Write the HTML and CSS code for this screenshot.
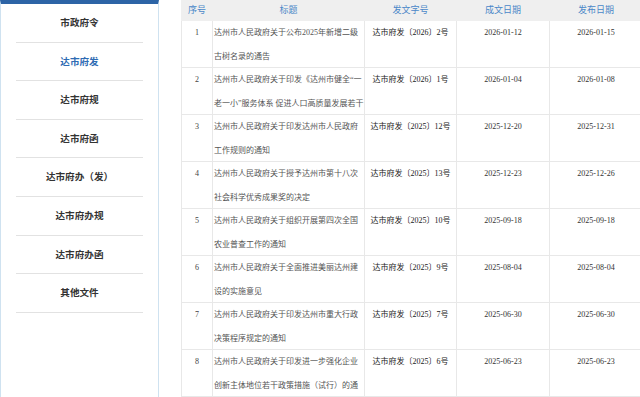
FILE: index.html
```html
<!DOCTYPE html>
<html lang="zh-CN">
<head>
    <meta charset="UTF-8">
    <meta name="viewport" content="width=device-width, initial-scale=1.0">
    <title>达州市人民政府 - 政府文件</title>
    <link rel="stylesheet" href="styles.css">
</head>
<body>

<aside class="side-nav">
    <ul class="nav-list">
        <li class="nav-item">市政府令</li>
        <li class="nav-item active">达市府发</li>
        <li class="nav-item">达市府规</li>
        <li class="nav-item">达市府函</li>
        <li class="nav-item">达市府办（发）</li>
        <li class="nav-item">达市府办规</li>
        <li class="nav-item">达市府办函</li>
        <li class="nav-item">其他文件</li>
    </ul>
</aside>

<main class="doc-list">
    <table class="doc-table">
        <colgroup>
            <col class="col-no">
            <col class="col-title">
            <col class="col-code">
            <col class="col-date">
            <col class="col-date">
        </colgroup>
        <thead>
            <tr>
                <th>序号</th>
                <th>标题</th>
                <th>发文字号</th>
                <th>成文日期</th>
                <th>发布日期</th>
            </tr>
        </thead>
        <tbody>
            <tr>
                <td class="no">1</td>
                <td><div class="title">达州市人民政府关于公布2025年新增二级古树名录的通告</div></td>
                <td class="code">达市府发〔2026〕2号</td>
                <td class="date">2026-01-12</td>
                <td class="date">2026-01-15</td>
            </tr>
            <tr>
                <td class="no">2</td>
                <td><div class="title">达州市人民政府关于印发《达州市健全“一老一小”服务体系 促进人口高质量发展若干措施》的通知</div></td>
                <td class="code">达市府发〔2026〕1号</td>
                <td class="date">2026-01-04</td>
                <td class="date">2026-01-08</td>
            </tr>
            <tr>
                <td class="no">3</td>
                <td><div class="title">达州市人民政府关于印发达州市人民政府工作规则的通知</div></td>
                <td class="code">达市府发〔2025〕12号</td>
                <td class="date">2025-12-20</td>
                <td class="date">2025-12-31</td>
            </tr>
            <tr>
                <td class="no">4</td>
                <td><div class="title">达州市人民政府关于授予达州市第十八次社会科学优秀成果奖的决定</div></td>
                <td class="code">达市府发〔2025〕13号</td>
                <td class="date">2025-12-23</td>
                <td class="date">2025-12-26</td>
            </tr>
            <tr>
                <td class="no">5</td>
                <td><div class="title">达州市人民政府关于组织开展第四次全国农业普查工作的通知</div></td>
                <td class="code">达市府发〔2025〕10号</td>
                <td class="date">2025-09-18</td>
                <td class="date">2025-09-18</td>
            </tr>
            <tr>
                <td class="no">6</td>
                <td><div class="title">达州市人民政府关于全面推进美丽达州建设的实施意见</div></td>
                <td class="code">达市府发〔2025〕9号</td>
                <td class="date">2025-08-04</td>
                <td class="date">2025-08-04</td>
            </tr>
            <tr>
                <td class="no">7</td>
                <td><div class="title">达州市人民政府关于印发达州市重大行政决策程序规定的通知</div></td>
                <td class="code">达市府发〔2025〕7号</td>
                <td class="date">2025-06-30</td>
                <td class="date">2025-06-30</td>
            </tr>
            <tr>
                <td class="no">8</td>
                <td><div class="title">达州市人民政府关于印发进一步强化企业创新主体地位若干政策措施（试行）的通知</div></td>
                <td class="code">达市府发〔2025〕6号</td>
                <td class="date">2025-06-23</td>
                <td class="date">2025-06-23</td>
            </tr>
        </tbody>
    </table>
</main>

</body>
</html>
```

FILE: styles.css
```css
body {
    margin: 0;
    padding: 0;
    display: flex;
    align-items: flex-start;
    overflow: hidden;
    height: 397px;
    font-family: "Liberation Serif", "Noto Sans CJK SC", serif;
    color: #333;
    background: #fff;
}
.side-nav {
    flex: 0 0 auto;
    width: 159px;
    height: 397px;
    box-sizing: border-box;
    border-top: 4.5px solid #2d64a6;
    border-left: 1px solid #cfe2f0;
    border-right: 1px solid #cfe2f0;
}
.nav-list {
    list-style: none;
    margin: 0;
    padding: 0 15px;
}
.nav-item {
    height: 37.6px;
    line-height: 37.6px;
    text-align: center;
    border-bottom: 1px solid #e2e2e2;
    font-family: "Noto Sans CJK SC", sans-serif;
    font-size: 9.6px;
    font-weight: bold;
    color: #333;
}
.nav-item.active {
    color: #2e6bb3;
}
.doc-list {
    flex: 0 0 auto;
    margin-left: 22px;
}
.doc-table {
    width: 462px;
    table-layout: fixed;
    border-collapse: collapse;
    font-size: 8px;
}
.col-no { width: 31px; }
.col-title { width: 152px; }
.col-code { width: 92px; }
.col-date { width: 93px; }
.doc-table th {
    height: 20px;
    padding: 0;
    background: #efefef;
    color: #4a87c8;
    font-family: "Noto Sans CJK SC", sans-serif;
    font-size: 9px;
    font-weight: normal;
    line-height: 20px;
    border: 1px solid #efefef;
    border-top: 0;
}
.doc-table td {
    padding: 0;
    vertical-align: top;
    line-height: 24px;
    border: 1px solid #e8e8e8;
    text-align: center;
}
.doc-table td.no {
    color: #444;
}
.title {
    height: 46px;
    overflow: hidden;
    padding: 0 0 0 1px;
    text-align: left;
    color: #555;
    word-break: break-all;
}
.code {
    color: #222;
    white-space: nowrap;
}
.date {
    color: #333;
}
```
